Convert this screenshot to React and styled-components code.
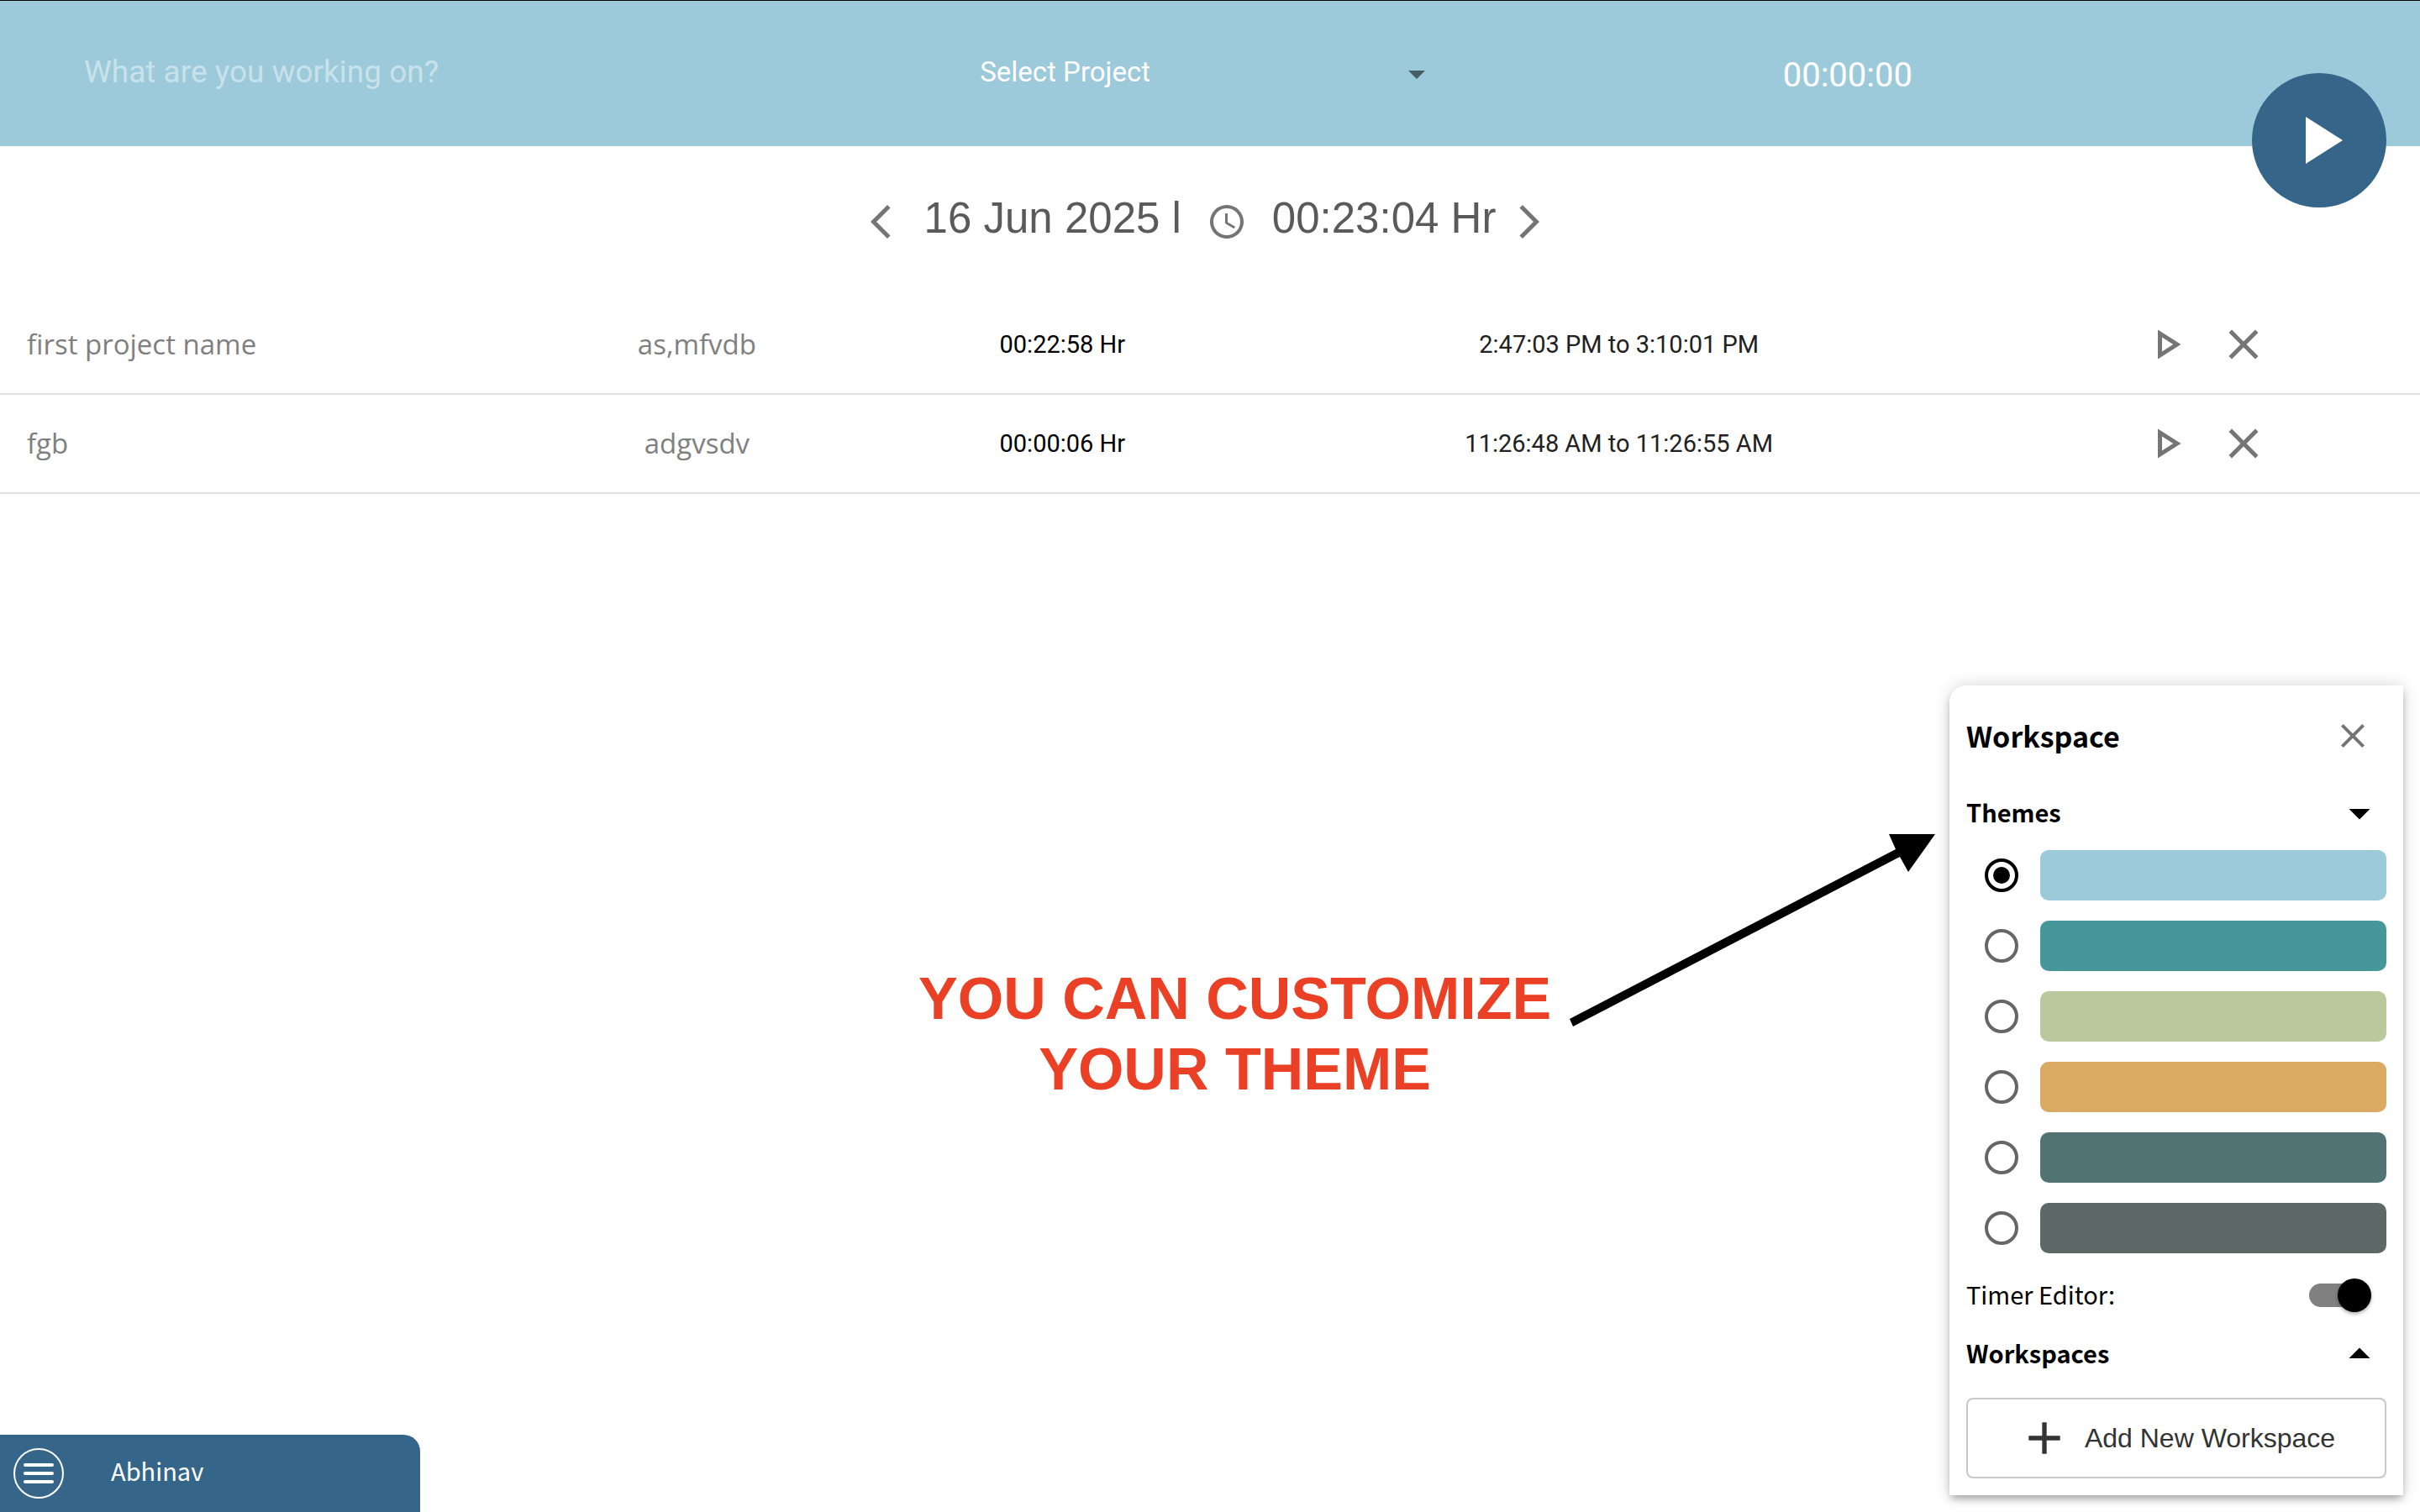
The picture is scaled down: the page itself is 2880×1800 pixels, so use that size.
import React, { useState } from "react";
import styled, { createGlobalStyle, css } from "styled-components";

const roboto = `Roboto, "Liberation Sans", sans-serif`;
const helvetica = `"Liberation Sans", Arial, sans-serif`;
const openSans = `"Open Sans", "Noto Sans", sans-serif`;
const sourceSans = `"Noto Sans CJK JP", "Noto Sans", sans-serif`;

const GlobalStyle = createGlobalStyle`
  *, *::before, *::after { box-sizing: border-box; }
  body { margin: 0; background: #fff; font-family: ${roboto}; color: #000; }
  button, input, select { font: inherit; color: inherit; }
  button { padding: 0; border: 0; background: none; cursor: pointer; }
`;

const THEMES = [
  { name: "Sky", color: "#9ccada" },
  { name: "Teal", color: "#45979a" },
  { name: "Sage", color: "#b9c99d" },
  { name: "Amber", color: "#daa963" },
  { name: "Pine", color: "#517373" },
  { name: "Slate", color: "#5d6968" },
];

const ENTRIES = [
  { task: "first project name", project: "as,mfvdb", duration: "00:22:58 Hr", range: "2:47:03 PM to 3:10:01 PM" },
  { task: "fgb", project: "adgvsdv", duration: "00:00:06 Hr", range: "11:26:48 AM to 11:26:55 AM" },
];

const PATHS = {
  play: "M8 5v14l11-7z",
  playOutline: "M10 8.64 15.27 12 10 15.36V8.64M8 5v14l11-7L8 5z",
  close: "M19 6.41 17.59 5 12 10.59 6.41 5 5 6.41 10.59 12 5 17.59 6.41 19 12 13.41 17.59 19 19 17.59 13.41 12z",
  back: "M17.77 3.77 16 2 6 12l10 10 1.77-1.77L9.54 12z",
  forward: "M6.23 20.23 8 22l10-10L8 2 6.23 3.77 14.46 12z",
  clock:
    "M11.99 2C6.47 2 2 6.48 2 12s4.47 10 9.99 10C17.52 22 22 17.52 22 12S17.52 2 11.99 2zM12 20c-4.42 0-8-3.58-8-8s3.58-8 8-8 8 3.58 8 8-3.58 8-8 8zm.5-13H11v6l5.25 3.15.75-1.23-4.5-2.67z",
  down: "M7 10l5 5 5-5z",
  up: "M7 14l5-5 5 5z",
  add: "M19 13h-6v6h-2v-6H5v-2h6V5h2v6h6v2z",
};

const Svg = styled.svg`
  display: block;
  flex: none;
  width: ${(p) => p.$size}px;
  height: ${(p) => p.$size}px;
  fill: currentColor;
`;

const Icon = ({ name, size = 48 }) => (
  <Svg $size={size} viewBox="0 0 24 24" aria-hidden="true">
    <path d={PATHS[name]} />
  </Svg>
);

const Page = styled.div`
  position: relative;
  min-height: 100vh;
  overflow: hidden;
`;

const TimerBar = styled.header`
  position: relative;
  display: grid;
  grid-template-columns: 41.2% 21% 1fr;
  align-items: center;
  height: 174px;
  padding: 0 192px 0 100px;
  border-top: 1px solid #000;
  background: ${(p) => p.$color};
  color: #fff;
`;

const TaskInput = styled.input`
  width: 80%;
  padding: 0 0 4px;
  border: 0;
  outline: 0;
  background: transparent;
  font-size: 37px;
  line-height: 48px;
  &::placeholder { color: #fff; opacity: 0.45; }
`;

const ProjectPicker = styled.div`
  display: grid;
  align-items: center;
  > * { grid-area: 1 / 1; }
  > svg { justify-self: end; color: rgba(0, 0, 0, 0.54); pointer-events: none; }
`;

const ProjectSelect = styled.select`
  appearance: none;
  width: 100%;
  padding: 0 0 4px;
  border: 0;
  outline: 0;
  background: transparent;
  font-size: 33px;
  line-height: 48px;
`;

const Elapsed = styled.output`
  padding-top: 4px;
  text-align: center;
  font-size: 40px;
  line-height: 48px;
`;

const StartButton = styled.button`
  position: absolute;
  top: 86px;
  right: 40px;
  display: grid;
  place-items: center;
  width: 160px;
  height: 160px;
  border-radius: 50%;
  background: #356689;
  color: #fff;
`;

const DayNav = styled.nav`
  display: flex;
  justify-content: center;
  align-items: center;
  height: 177px;
  padding: 3px 12px 0 0;
  color: #757575;
`;

const DayText = styled.h1`
  margin: 0 ${(p) => p.$after}px 8px ${(p) => p.$before}px;
  font: 400 51px/60px ${helvetica};
  color: #5a5a5a;
`;

const IconButton = styled.button`
  display: grid;
  place-items: center;
  color: #757575;
`;

const Entries = styled.table`
  width: 100%;
  table-layout: fixed;
  border-collapse: collapse;
`;

const EntryRow = styled.tr`
  height: 118px;
  border-bottom: 2px solid #e0e0e0;
`;

const Cell = styled.td`
  width: ${(p) => p.$width};
  padding: 0;
  text-align: center;
  font-size: 29px;
  line-height: 40px;
  ${(p) => p.$soft && css`
    color: #212121;
  `}
  ${(p) => p.$muted && css`
    font-family: ${openSans};
    font-size: 33px;
    color: #808080;
  `}
  ${(p) => p.$first && css`
    padding-left: 32px;
    text-align: left;
  `}
`;

const Actions = styled.div`
  display: flex;
  gap: 32px;
  padding-left: 169px;
`;

const Annotation = styled.div`
  position: absolute;
  top: 992px;
  left: 1093px;
  display: flex;
  align-items: flex-end;
  gap: 20px;
  > svg { display: block; margin-bottom: 93px; }
`;

const AnnotationText = styled.p`
  margin: 0;
  text-align: center;
  font: 700 70px/84px ${helvetica};
  color: #ea4025;
`;

const Panel = styled.aside`
  position: absolute;
  right: 20px;
  bottom: 20px;
  display: flex;
  flex-direction: column;
  width: 540px;
  padding: 20px;
  border-radius: 20px 0 0 0;
  background: #fff;
  box-shadow: 0 6px 10px -2px rgba(0, 0, 0, 0.3), 0 0 20px rgba(0, 0, 0, 0.16);
  font-family: ${sourceSans};
`;

const PanelRow = styled.div`
  display: flex;
  justify-content: space-between;
  align-items: center;
  height: ${(p) => p.$height}px;
  margin-bottom: ${(p) => p.$after || 0}px;
  padding-right: ${(p) => p.$inset}px;
`;

const PanelTitle = styled.h2`
  margin: 0;
  font-size: 34px;
  font-weight: 700;
  line-height: 48px;
`;

const SectionTitle = styled.h3`
  margin: 0;
  padding-bottom: 4px;
  font-size: 29px;
  font-weight: 700;
  line-height: 40px;
`;

const ToggleButton = styled(IconButton)`
  color: #000;
`;

const ThemeList = styled.div`
  display: grid;
  gap: 24px;
`;

const ThemeOption = styled.label`
  display: flex;
  align-items: center;
  gap: 26px;
  height: 60px;
  padding-left: 22px;
`;

const Radio = styled.input`
  appearance: none;
  display: grid;
  place-items: center;
  flex: none;
  width: 40px;
  height: 40px;
  margin: 0;
  border: 4px solid #666;
  border-radius: 50%;
  &:checked { border-color: #000; }
  &:checked::after {
    content: "";
    width: 20px;
    height: 20px;
    border-radius: 50%;
    background: #000;
  }
`;

const Swatch = styled.span`
  flex: 1;
  height: 60px;
  border-radius: 10px;
  background: ${(p) => p.$color};
`;

const SettingLabel = styled.label`
  padding-bottom: 4px;
  font-size: 29px;
  line-height: 40px;
`;

const Switch = styled.input`
  appearance: none;
  display: flex;
  align-items: center;
  width: 68px;
  height: 28px;
  margin: 0;
  border-radius: 14px;
  background: #808080;
  &::after {
    content: "";
    flex: none;
    width: 40px;
    height: 40px;
    margin-left: -6px;
    border-radius: 50%;
    background: #000;
    box-shadow: 0 2px 4px rgba(0, 0, 0, 0.35);
  }
  &:checked::after { margin-left: 34px; }
`;

const AddButton = styled.button`
  display: flex;
  align-items: center;
  justify-content: center;
  gap: 16px;
  height: 96px;
  border: 2px solid #c8c8c8;
  border-radius: 8px;
  font: 400 32px/40px ${helvetica};
  color: #333;
`;

const UserBar = styled.footer`
  position: absolute;
  left: 0;
  bottom: 0;
  display: flex;
  align-items: center;
  gap: 56px;
  width: 500px;
  height: 92px;
  padding: 0 16px;
  border-radius: 0 20px 0 0;
  background: #356689;
  color: #fff;
`;

const UserName = styled.span`
  padding-bottom: 8px;
  font: 400 29px/40px ${sourceSans};
`;

const MenuButton = styled.button`
  display: flex;
  flex-direction: column;
  align-items: center;
  justify-content: center;
  gap: 6px;
  width: 60px;
  height: 60px;
  border: 2px solid #fff;
  border-radius: 50%;
`;

const MenuLine = styled.span`
  width: 36px;
  height: 4px;
  border-radius: 2px;
  background: #fff;
`;

export default function App() {
  const [theme, setTheme] = useState(0);
  const [editor, setEditor] = useState(true);

  return (
    <Page>
      <GlobalStyle />
      <TimerBar $color={THEMES[theme].color}>
        <TaskInput aria-label="Task" placeholder="What are you working on?" />
        <ProjectPicker>
          <ProjectSelect aria-label="Project">
            <option>Select Project</option>
          </ProjectSelect>
          <Icon name="down" />
        </ProjectPicker>
        <Elapsed>00:00:00</Elapsed>
        <StartButton aria-label="Start timer">
          <Icon name="play" size={96} />
        </StartButton>
      </TimerBar>

      <DayNav aria-label="Day">
        <IconButton aria-label="Previous day"><Icon name="back" /></IconButton>
        <DayText $before={28} $after={30}>16 Jun 2025 l</DayText>
        <Icon name="clock" />
        <DayText as="p" $before={30} $after={16}>00:23:04 Hr</DayText>
        <IconButton aria-label="Next day"><Icon name="forward" /></IconButton>
      </DayNav>

      <Entries>
        <tbody>
          {ENTRIES.map((entry) => (
            <EntryRow key={entry.task}>
              <Cell $width="21%" $muted $first>{entry.task}</Cell>
              <Cell $width="15.6%" $muted>{entry.project}</Cell>
              <Cell $width="14.6%">{entry.duration}</Cell>
              <Cell $width="31.4%" $soft>{entry.range}</Cell>
              <Cell>
                <Actions>
                  <IconButton aria-label="Resume"><Icon name="playOutline" size={60} /></IconButton>
                  <IconButton aria-label="Delete"><Icon name="close" size={60} /></IconButton>
                </Actions>
              </Cell>
            </EntryRow>
          ))}
        </tbody>
      </Entries>

      <Annotation>
        <AnnotationText>
          YOU CAN CUSTOMIZE
          <br />
          YOUR THEME
        </AnnotationText>
        <svg width="438" height="230" viewBox="0 0 438 230" aria-hidden="true">
          <path d="M2 221 390 19 382 1H437L405 46 395 28 6 230z" />
        </svg>
      </Annotation>

      <Panel>
        <PanelRow $height={80} $inset={16} $after={8}>
          <PanelTitle>Workspace</PanelTitle>
          <IconButton aria-label="Close"><Icon name="close" /></IconButton>
        </PanelRow>
        <PanelRow $height={88} $inset={2}>
          <SectionTitle>Themes</SectionTitle>
          <ToggleButton aria-label="Collapse themes"><Icon name="down" size={60} /></ToggleButton>
        </PanelRow>
        <ThemeList>
          {THEMES.map((t, i) => (
            <ThemeOption key={t.name}>
              <Radio type="radio" name="theme" aria-label={t.name} checked={i === theme} onChange={() => setTheme(i)} />
              <Swatch $color={t.color} />
            </ThemeOption>
          ))}
        </ThemeList>
        <PanelRow $height={100} $inset={24}>
          <SettingLabel htmlFor="timer-editor">Timer Editor:</SettingLabel>
          <Switch id="timer-editor" type="checkbox" role="switch" checked={editor} onChange={() => setEditor(!editor)} />
        </PanelRow>
        <PanelRow $height={40} $inset={2} $after={32}>
          <SectionTitle>Workspaces</SectionTitle>
          <ToggleButton aria-label="Expand workspaces"><Icon name="up" size={60} /></ToggleButton>
        </PanelRow>
        <AddButton>
          <Icon name="add" size={64} />
          Add New Workspace
        </AddButton>
      </Panel>

      <UserBar>
        <MenuButton aria-label="Menu">
          <MenuLine />
          <MenuLine />
          <MenuLine />
        </MenuButton>
        <UserName>Abhinav</UserName>
      </UserBar>
    </Page>
  );
}
